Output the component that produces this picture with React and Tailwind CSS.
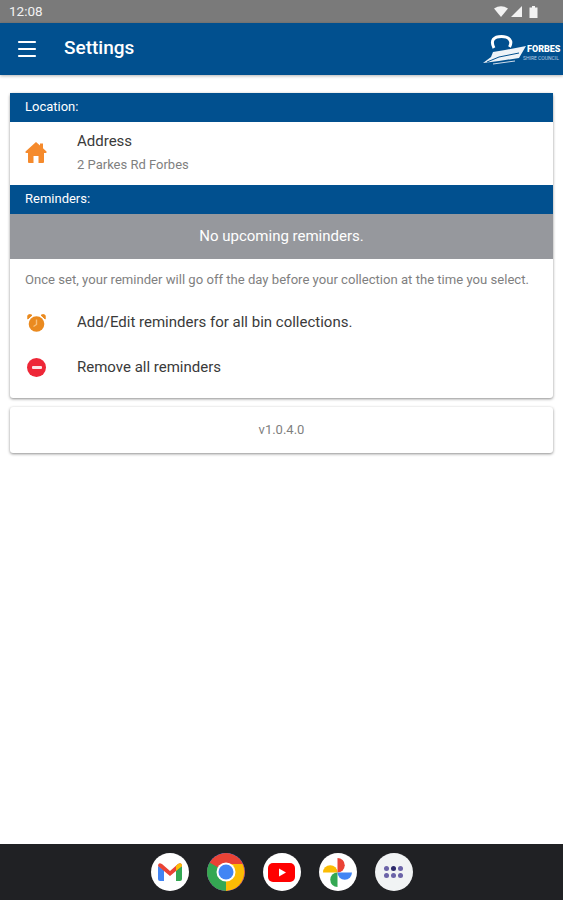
import { Menu } from 'lucide-react'

const roboto = { fontFamily: 'Roboto, sans-serif' }

const StatusIcons = () => (
  <div className="flex items-center gap-[3px]">
    <svg width="14" height="11" viewBox="0 0 14 11"><path d="M0 2.5 Q7 -2 14 2.5 L7 11 Z" fill="#f2f2f2" /></svg>
    <svg width="11" height="11" viewBox="0 0 11 11"><path d="M11 0 V11 H0 Z" fill="#f2f2f2" /></svg>
    <svg width="9" height="12" viewBox="0 0 9 12" className="ml-[4px]"><path d="M3 0 H6 V1.5 H8.5 V12 H0.5 V1.5 H3 Z" fill="#f2f2f2" /></svg>
  </div>
)

const ForbesLogo = () => (
  <div className="relative w-[80px] h-[32px]">
    <svg width="80" height="32" viewBox="0 0 80 32" className="absolute left-0 top-0">
      <path d="M13 15 C9 7 13 3.5 20.5 3.5 C28 3.5 32 8 28.5 14" stroke="#fff" strokeWidth="3" fill="none" />
      <path d="M12 19 L24 17 L45 13 L38 25 L18 28 L2 30 L10 24 Z" fill="#eef3f8" />
      <path d="M6 29 L18 24 L38 20" stroke="#01508f" strokeWidth="1" fill="none" />
      <path d="M12 31 L34 28" stroke="#cfdcea" strokeWidth="1" fill="none" />
    </svg>
    <span className="absolute left-[46px] top-[10px] text-[9px] leading-[12px] font-black text-white whitespace-nowrap" style={roboto}>FORBES</span>
    <span className="absolute left-[42px] top-[22px] text-[5px] leading-[7px] text-[#b8cbe0] whitespace-nowrap" style={roboto}>SHIRE COUNCIL</span>
  </div>
)

const HomeIcon = () => (
  <svg width="22" height="21" viewBox="0 0 22 21">
    <path d="M11 0 L15 3.5 V1.5 H18 V6.2 L21.5 9.5 Q22 11 20.5 11 H19 V20 Q19 21 18 21 H13.5 V14 H8.5 V21 H4 Q3 21 3 20 V11 H1.5 Q0 11 0.5 9.5 Z" fill="#f58a2c" />
  </svg>
)

const AlarmIcon = () => (
  <svg width="19" height="18" viewBox="0 0 19 18">
    <circle cx="9.5" cy="10" r="7.8" fill="#ea8a1f" />
    <path d="M0.8 5 L5 1.2 Q2 -0.3 0.8 1.5 Z M18.2 5 L14 1.2 Q17 -0.3 18.2 1.5 Z" fill="#ea8a1f" stroke="#ea8a1f" strokeWidth="1" />
    <path d="M9.5 5.5 V10.5 L6.5 12.5" stroke="#f8c07a" strokeWidth="1.4" fill="none" />
  </svg>
)

const RemoveIcon = () => (
  <div className="w-[19px] h-[19px] rounded-full bg-[#ee2737] flex items-center justify-center">
    <div className="w-[10px] h-[3px] bg-[#fde4e6] rounded-[1px]" />
  </div>
)

const SectionHeader = ({ children }) => (
  <div className="h-[29px] bg-[#01508f] px-[15px] pb-[2px] flex items-center text-[13px] text-white">{children}</div>
)

const DockIcon = ({ children, bg = 'bg-white' }) => (
  <div className={`w-[38px] h-[38px] rounded-full ${bg} flex items-center justify-center overflow-hidden`}>{children}</div>
)

const GmailIcon = () => (
  <svg width="24" height="18" viewBox="0 0 24 18">
    <path d="M0 3 V16 Q0 18 2 18 H6 V7 Z" fill="#4285f4" />
    <path d="M24 3 V16 Q24 18 22 18 H18 V7 Z" fill="#34a853" />
    <path d="M0 3 Q0 -1 4 1 L12 8 L20 1 Q24 -1 24 3 L18 8 L12 13 L6 8 Z" fill="#ea4335" />
    <path d="M20 1 Q24 -1 24 3 L18 8 V3 Z" fill="#fbbc04" />
  </svg>
)

const ChromeIcon = () => (
  <svg width="38" height="38" viewBox="0 0 38 38">
    <circle cx="19" cy="19" r="19" fill="#ea4335" />
    <path d="M19 19 L2.5 9.5 A19 19 0 0 0 19 38 L28.5 19 Z" fill="#34a853" />
    <path d="M19 11 H35.5 A19 19 0 0 1 19 38 L19 19 Z" fill="#fbbc04" />
    <circle cx="19" cy="19" r="9.5" fill="#fff" />
    <circle cx="19" cy="19" r="7.5" fill="#4285f4" />
  </svg>
)

const YoutubeIcon = () => (
  <svg width="27" height="19" viewBox="0 0 27 19">
    <rect width="27" height="19" rx="5" fill="#f00" />
    <path d="M11 5.5 L18 9.5 L11 13.5 Z" fill="#fff" />
  </svg>
)

const PhotosIcon = () => (
  <svg width="29" height="29" viewBox="0 0 30 30">
    <path d="M15 15 H0 A7.5 7.5 0 0 1 15 15 Z" fill="#fbbc04" />
    <path d="M15 15 V0 A7.5 7.5 0 0 1 15 15 Z" fill="#ea4335" />
    <path d="M15 15 H30 A7.5 7.5 0 0 1 15 15 Z" fill="#4285f4" />
    <path d="M15 15 V30 A7.5 7.5 0 0 1 15 15 Z" fill="#34a853" />
  </svg>
)

const AppsIcon = () => (
  <div className="grid grid-cols-3 gap-[2px]">
    <div className="w-[5px] h-[5px] rounded-full bg-[#6b63a8]" />
    <div className="w-[5px] h-[5px] rounded-full bg-[#2c2a6b]" />
    <div className="w-[5px] h-[5px] rounded-full bg-[#6b63a8]" />
    <div className="w-[5px] h-[5px] rounded-full bg-[#6b63a8]" />
    <div className="w-[5px] h-[5px] rounded-full bg-[#6b63a8]" />
    <div className="w-[5px] h-[5px] rounded-full bg-[#6b63a8]" />
  </div>
)

export default function App() {
  return (
    <div className="w-[563px] h-[900px] bg-white flex flex-col overflow-hidden" style={roboto}>
      {/* status bar */}
      <div className="h-[23px] bg-[#7a7a7a] flex items-center justify-between pl-[9px] pr-[25px]">
        <span className="text-[13.5px] text-[#f2f2f2]">12:08</span>
        <StatusIcons />
      </div>

      {/* app bar */}
      <div className="h-[52px] bg-[#01508f] flex items-center justify-between pl-[15px] pr-[2px] shadow-[0_1px_3px_rgba(0,0,0,0.3)]">
        <div className="flex items-center gap-[25px]">
          <Menu size={24} color="#fff" strokeWidth={2.2} />
          <span className="text-[19px] font-medium text-white pb-[1px]">Settings</span>
        </div>
        <ForbesLogo />
      </div>

      <div className="flex-1 px-[10px] pt-[18px]">
        <div className="bg-white rounded-[3px] pb-[8px] shadow-[0_1px_3px_rgba(0,0,0,0.45)]">
          <SectionHeader>Location:</SectionHeader>
          <div className="h-[63px] flex items-center">
            <div className="w-[67px] pl-[15px] pb-[3px]"><HomeIcon /></div>
            <div className="flex flex-col gap-[5px] pb-[2px]">
              <span className="text-[15px] leading-[20px] text-[#3a3a3a]">Address</span>
              <span className="text-[13px] leading-[18px] text-[#7f7f7f]">2 Parkes Rd Forbes</span>
            </div>
          </div>
          <SectionHeader>Reminders:</SectionHeader>
          <div className="h-[45px] bg-[#96989d] flex items-center justify-center text-[15px] text-white">No upcoming reminders.</div>
          <div className="px-[15px] pt-[13px] text-[13.1px] leading-[16px] text-[#7f7f7f] whitespace-nowrap">
            Once set, your reminder will go off the day before your collection at the time you select.
          </div>
          <div className="h-[45px] mt-[12px] flex items-center">
            <div className="w-[67px] pl-[17px]"><AlarmIcon /></div>
            <span className="text-[15px] text-[#3a3a3a]">Add/Edit reminders for all bin collections.</span>
          </div>
          <div className="h-[45px] flex items-center">
            <div className="w-[67px] pl-[17px]"><RemoveIcon /></div>
            <span className="text-[15px] text-[#3a3a3a]">Remove all reminders</span>
          </div>
        </div>

        <div className="mt-[9px] h-[46px] bg-white rounded-[3px] shadow-[0_1px_3px_rgba(0,0,0,0.45)] flex items-center justify-center text-[13px] text-[#7f7f7f]">
          v1.0.4.0
        </div>
      </div>

      {/* dock */}
      <div className="h-[56px] bg-[#202124] flex items-center justify-center gap-[18px]">
        <DockIcon><GmailIcon /></DockIcon>
        <DockIcon bg="bg-[#4285f4]"><ChromeIcon /></DockIcon>
        <DockIcon><YoutubeIcon /></DockIcon>
        <DockIcon><PhotosIcon /></DockIcon>
        <DockIcon bg="bg-[#f1f3f4]"><AppsIcon /></DockIcon>
      </div>
    </div>
  )
}
